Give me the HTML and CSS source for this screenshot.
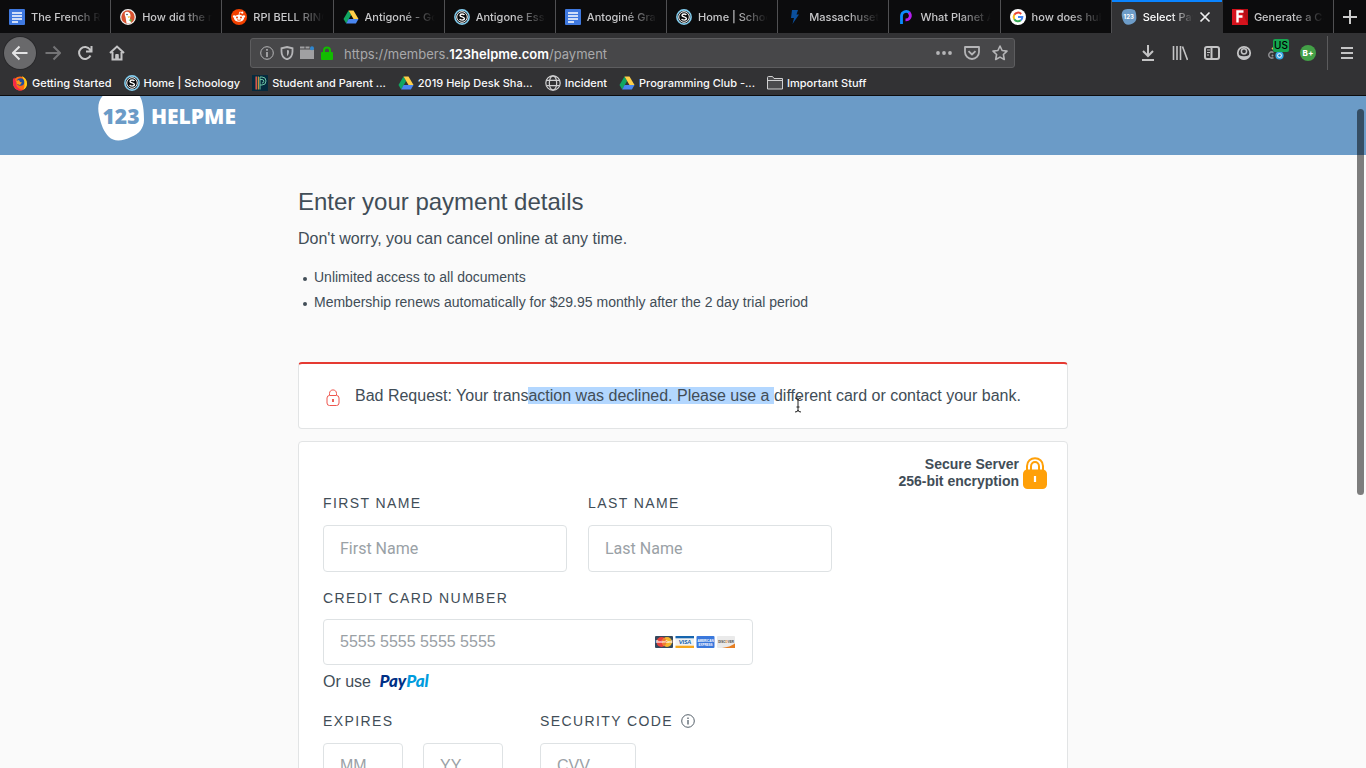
FILE: index.html
```html
<!DOCTYPE html>
<html lang="en">
<head>
<meta charset="utf-8">
<meta name="viewport" content="width=device-width, initial-scale=1">
<title>Select Payment | 123HelpMe</title>
<link rel="stylesheet" href="styles.css">
</head>
<body>
<svg class="defs" width="0" height="0" aria-hidden="true">
  <symbol id="i-docs" viewBox="0 0 16 16"><rect width="16" height="16" rx="1" fill="#3f79e0"/><path d="M3 4h10M3 7h10M3 10h10M3 13h6" stroke="#fff" stroke-width="1.6"/></symbol>
  <symbol id="i-drive" viewBox="0 0 16 16"><path d="M5.5 1.5L0.5 10l2.7 4.5L8.1 6z" fill="#11a660"/><path d="M5.5 1.5h5L15.5 10h-5z" fill="#ffcf48"/><path d="M5.6 10h9.9l-2.6 4.5H3.2z" fill="#4a86f0"/></symbol>
  <symbol id="i-schoology" viewBox="0 0 16 16"><circle cx="8" cy="8" r="7.1" fill="#0b0b0c" stroke="#84cdee" stroke-width="1.6"/><circle cx="8" cy="8" r="5.3" fill="none" stroke="#fff" stroke-width="1"/><path d="M10.3 6C10 4.7 6 4.500 6 6.500C6 8.300 10.400 7.500 10.400 9.600C10.400 11.700 6 11.500 5.700 9.900" fill="none" stroke="#fff" stroke-width="1.400"/></symbol>
  <symbol id="i-blob" viewBox="0 0 46 50"><path d="M7 3C14-1 34-1 41 4C45 9 46 20 46 29C46 37 41 43 33 46C25 50 16 51 11 46C6 41 3 34 1 24C-1 15 1 7 7 3Z"/></symbol>
</svg>

<header class="browser">
  <nav class="tabs" aria-label="Open tabs">
    <button class="tab"><svg class="ico"><use href="#i-docs"/></svg><span>The French Revolution</span></button>
    <button class="tab"><svg class="ico" viewBox="0 0 16 16"><circle cx="8" cy="8" r="7.300" fill="#d8512f" stroke="#eee" stroke-width="1.300"/><path d="M5 3.500C7 2 10.500 3 10.500 6.500L10 9.500L11 14C9 15 7 14.500 6.500 14L5.500 8C4.500 6 4.600 4.500 5 3.500Z" fill="#fff"/><path d="M7.500 7.500L11.500 7.200L8.500 9Z" fill="#f9b82d"/><circle cx="7" cy="5.500" r=".8" fill="#345"/><path d="M8.500 11l3-1v3z" fill="#65bc46"/></svg><span>How did the revolution</span></button>
    <button class="tab"><svg class="ico" viewBox="0 0 16 16"><circle cx="8" cy="8" r="8" fill="#f24100"/><ellipse cx="8" cy="9.300" rx="5" ry="3.500" fill="#fff"/><circle cx="3.200" cy="7.500" r="1.300" fill="#fff"/><circle cx="12.800" cy="7.500" r="1.300" fill="#fff"/><circle cx="11.300" cy="3.700" r="1.100" fill="#fff"/><path d="M8 6l.7-3 2.500.7" stroke="#fff" fill="none" stroke-width=".8"/><circle cx="6" cy="8.500" r="1" fill="#f24100"/><circle cx="10" cy="8.500" r="1" fill="#f24100"/><path d="M6 10.700Q8 12 10 10.700" stroke="#f24100" fill="none" stroke-width=".8"/></svg><span>RPI BELL RINGER</span></button>
    <button class="tab"><svg class="ico"><use href="#i-drive"/></svg><span>Antigoné - Google Drive</span></button>
    <button class="tab"><svg class="ico"><use href="#i-schoology"/></svg><span>Antigone Essay Final</span></button>
    <button class="tab"><svg class="ico"><use href="#i-docs"/></svg><span>Antoginé Graphic</span></button>
    <button class="tab"><svg class="ico"><use href="#i-schoology"/></svg><span>Home | Schoology</span></button>
    <button class="tab"><svg class="ico" viewBox="0 0 16 16"><path d="M5 1h6L9.500 5.500H12L5.500 15 7 9H4z" fill="#0b4f9c"/></svg><span>Massachusetts Law</span></button>
    <button class="tab"><svg class="ico" viewBox="0 0 16 16"><path d="M3.500 15V7a4.600 4.600 0 0 1 8-3" stroke="#0b8cff" stroke-width="2.800" fill="none"/><path d="M11 3.500C14 7 11.500 11 7.500 10.800" stroke="#b51cf0" stroke-width="2.800" fill="none"/></svg><span>What Planet Are You</span></button>
    <button class="tab"><svg class="ico" viewBox="0 0 16 16"><circle cx="8" cy="8" r="8" fill="#fff"/><g fill="none" stroke-width="2"><path d="M4.300 5.800A4.300 4.300 0 0 1 11.200 5" stroke="#e94435"/><path d="M4.300 10.200A4.300 4.300 0 0 1 4.300 5.800" stroke="#f9bc15"/><path d="M4.300 10.200A4.300 4.300 0 0 0 10.800 11.300" stroke="#34a853"/><path d="M8 8h4.300A4.300 4.300 0 0 1 10.800 11.300" stroke="#4285f4"/></g></svg><span>how does hubble work</span></button>
    <button class="tab active" aria-current="page"><span class="favicon-123"><svg class="ico"><use href="#i-blob"/></svg><b>123</b></span><span class="label">Select Payment</span><svg class="close" viewBox="0 0 12 12"><path d="M1.500 1.500l9 9M10.500 1.500l-9 9" stroke="#eee" stroke-width="1.700"/></svg></button>
    <button class="tab"><svg class="ico" viewBox="0 0 16 16"><path d="M0 0h16v16H0z" fill="#d5131d"/><path d="M9 0h7v16z" fill="#b70c15"/><path d="M5.500 13.500v-11h6M5.500 7.500h5" fill="none" stroke="#fff" stroke-width="2.400"/></svg><span>Generate a Card</span></button>
    <button class="new-tab" aria-label="New tab"><svg viewBox="0 0 14 14"><path d="M7 0v14M0 7h14" stroke="#ccc" stroke-width="2"/></svg></button>
  </nav>

  <div class="toolbar">
    <div class="nav-buttons">
      <button class="tool back" aria-label="Back"><svg class="ico" viewBox="0 0 16 16"><path d="M15.500 8H1M7.500 1.500L1 8l6.500 6.500"/></svg></button>
      <button class="tool dim" aria-label="Forward"><svg class="ico" viewBox="0 0 16 16"><path d="M.5 8H15M8.500 1.500L15 8l-6.500 6.500"/></svg></button>
      <button class="tool" aria-label="Reload"><svg class="ico" viewBox="0 0 16 16"><path d="M13.500 10.500A6 6 0 1 1 13 4.500L14.500 6M14.500 1v5.500H9"/></svg></button>
      <button class="tool" aria-label="Home"><svg class="ico" viewBox="0 0 16 16"><path d="M1 8l7-6.500L15 8M3.500 7v7.500h9V7M8 14v-4"/><path d="M6.700 9.500h2.600v5H6.700z" stroke-width="1"/></svg></button>
    </div>
    <div class="urlbar">
      <svg class="small" viewBox="0 0 14 14"><g fill="none" stroke="#b5b5b7"><circle cx="7" cy="7" r="6.300"/><path d="M7 6v5M7 3v1.700" stroke-width="1.600"/></g></svg>
      <svg class="small" viewBox="0 0 14 14"><path d="M7 1l5.500 1.300V5.500C12.500 10 10 12.300 7 13.300C4 12.300 1.500 10 1.500 5.500V2.300Z" fill="none" stroke="#b5b5b7" stroke-width="1.800"/><path d="M7 4L9 4.500C9 7.500 8.500 9 7 10Z" fill="#b5b5b7"/></svg>
      <svg class="small" viewBox="0 0 14 14"><path d="M0 3.500h14V13H0z" fill="#a0a0a2"/><path d="M0 1.500h4.500M5.500 1.500h4" stroke="#a0a0a2" stroke-width="2"/><circle cx="12" cy="2.200" r="2" fill="#2f87d0"/></svg>
      <svg class="small" viewBox="0 0 14 14"><path d="M4 7V4.500a3 3 0 0 1 6 0V7" fill="none" stroke="#12bc00" stroke-width="2"/><rect x="1" y="6" width="12" height="8" rx="1" fill="#12bc00"/></svg>
      <div class="address" role="textbox" aria-label="Address" contenteditable="true" spellcheck="false">https://members.<b>123helpme.com</b>/payment</div>
      <button class="url-action" aria-label="Page actions"><svg class="ico" viewBox="0 0 16 16"><g fill="#b5b5b7"><circle cx="2" cy="8" r="1.900"/><circle cx="8" cy="8" r="1.900"/><circle cx="14" cy="8" r="1.900"/></g></svg></button>
      <button class="url-action" aria-label="Save to Pocket"><svg class="ico" viewBox="0 0 16 16"><path d="M1 2h14v5a7 7 0 0 1-14 0zM4.500 6.200L8 9.500l3.500-3.300" fill="none" stroke="#b5b5b7" stroke-width="1.800" stroke-linejoin="round"/></svg></button>
      <button class="url-action" aria-label="Bookmark page"><svg class="ico" viewBox="0 0 16 16"><path d="M8 1l2.100 4.500 4.900.6-3.600 3.400.9 5L8 12.100l-4.300 2.400.9-5L1 6.100l4.900-.6z" fill="none" stroke="#b5b5b7" stroke-width="1.600" stroke-linejoin="round"/></svg></button>
    </div>
    <div class="actions">
      <button class="tool" aria-label="Downloads"><svg class="ico" viewBox="0 0 16 16"><path d="M8 0v11M3 6l5 5 5-5M2 15h12"/></svg></button>
      <button class="tool" aria-label="Library"><svg class="ico" viewBox="0 0 16 16"><path d="M1.500 1v14M5 1v14M8.500 1v14M10.500 1.500L15.500 15" stroke-width="1.600"/></svg></button>
      <button class="tool" aria-label="Sidebars"><svg class="ico" viewBox="0 0 16 16"><rect x="1" y="2" width="14" height="12" rx="2"/><path d="M7.500 2v12"/><path d="M3 5h3M3 7.500h3M3 10h2" stroke-width="1"/></svg></button>
      <button class="tool" aria-label="Account"><svg class="ico" viewBox="0 0 16 16"><circle cx="8" cy="8" r="6.200" stroke-width="1.800"/><circle cx="8" cy="6.300" r="2.600" stroke-width="1.500"/><path d="M2.500 10Q8 12.500 13.500 10Q12 14.500 8 14.500Q4 14.500 2.500 10Z" fill="#c4c4c5" stroke="none"/></svg></button>
      <button class="tool vpn" aria-label="VPN region"><svg class="ico" viewBox="0 0 16 16"><path d="M5.500 7.500a3 3 0 1 0 0 5" stroke="#8b8b8e" stroke-width="1.500"/><circle cx="4.500" cy="10.500" r="1" fill="#999" stroke="none"/><path d="M4 4l3-2" stroke="#e5b84c"/><circle cx="11.500" cy="10.500" r="3.200" fill="#fff" stroke="#38a9e8" stroke-width="1.800"/><circle cx="11.500" cy="10.500" r="1.300" fill="#1578bb" stroke="none"/></svg><span class="badge">US</span></button>
      <button class="tool" aria-label="Grade extension"><span class="grade">B+</span></button>
      <span class="divider"></span>
      <button class="tool" aria-label="Menu"><svg class="ico" viewBox="0 0 16 16"><path d="M2 3h12M2 8h12M2 13h12"/></svg></button>
    </div>
  </div>

  <nav class="bookmarks" aria-label="Bookmarks">
    <a href="#"><svg class="ico" viewBox="0 0 16 16"><circle cx="8" cy="8.500" r="7" fill="#ff6a16"/><path d="M10 1C16 4 17 12 11 15C14 11 12 6 10 1Z" fill="#ffcb16"/><path d="M1 4C0 13 6 17 11 15C5 14 3 10 5 6L3 5.500L2.500 2.500Z" fill="#f42949"/><circle cx="8.500" cy="7" r="3.800" fill="#204d9d"/><path d="M4 6l3-1 1 2 2 .5-2 2.500-3-1z" fill="#ff9a18"/></svg>Getting Started</a>
    <a href="#"><svg class="ico"><use href="#i-schoology"/></svg>Home | Schoology</a>
    <a href="#"><svg class="ico" viewBox="0 0 16 16"><path d="M0 0h16v16H0z" fill="#062b3e"/><path d="M4.200 1.500v13" stroke="#ef5b4d" stroke-width="1.400"/><path d="M6.300 1.500v13" stroke="#f5aa3c" stroke-width="1"/><path d="M8 14.500V2h2a3.500 3.500 0 0 1 0 8H8M8 4.500h2a1.500 1.500 0 0 1 0 3.500" fill="none" stroke="#6bc4a4"/></svg>Student and Parent ...</a>
    <a href="#"><svg class="ico"><use href="#i-drive"/></svg>2019 Help Desk Sha...</a>
    <a href="#"><svg class="ico" viewBox="0 0 16 16"><g fill="none" stroke="#d0d0d1" stroke-width="1.200"><circle cx="8" cy="8" r="7.200"/><ellipse cx="8" cy="8" rx="3.700" ry="7.200"/><path d="M1.500 5.300h13M1.500 10.700h13"/></g></svg>Incident</a>
    <a href="#"><svg class="ico"><use href="#i-drive"/></svg>Programming Club -...</a>
    <a href="#"><svg class="ico" viewBox="0 0 16 16"><path d="M.5 14V2.500Q.5 1.500 1.500 1.500H5.500L7 3.500H15.500V14ZM.5 5.500H15.500" fill="#4b4b4d" stroke="#d0d0d1"/></svg>Important Stuff</a>
  </nav>
</header>

<div class="page">
  <header class="site-header">
    <div class="site-inner">
      <a class="logo" href="#"><span class="logo-mark"><svg><use href="#i-blob"/></svg><b>123</b></span><span class="logo-name">HELPME</span></a>
    </div>
  </header>
  <main class="content">
    <h1>Enter your payment details</h1>
    <p class="lead">Don't worry, you can cancel online at any time.</p>
    <ul class="benefits">
      <li>Unlimited access to all documents</li>
      <li>Membership renews automatically for $29.95 monthly after the 2 day trial period</li>
    </ul>
    <section class="alert" role="alert">
      <svg class="ico" viewBox="0 0 16 18"><g fill="none" stroke="#ee574f" stroke-width="1"><rect x="2" y="6.500" width="12" height="10" rx="2.500"/><path d="M4.500 6V4.500C4.500-.3 11.500-.3 11.500 4.500V6"/></g><path d="M8 10v3" stroke="#e83a31" stroke-width="1.600"/></svg>
      <p>Bad Request: Your trans<mark>action was declined. Please use a </mark>dif<span class="caret-anchor">fe<svg class="cursor" viewBox="0 0 8 16"><path d="M1 1Q4 1 4 3Q4 1 7 1M4 2.500v11M1 15Q4 15 4 13Q4 15 7 15M2.500 10h3" fill="none" stroke="#222"/></svg></span>rent card or contact your bank.</p>
    </section>
    <form class="card">
      <div class="secure">
        <p>Secure Server<br>256-bit encryption</p>
        <svg viewBox="0 0 24 32"><path d="M4 15V9C4-1.300 20-1.300 20 9v6M8 15V9.500C8 3.500 16 3.500 16 9.500V15" fill="none" stroke="#ffa009" stroke-width="2"/><rect y="12.500" width="24" height="19.500" rx="4.500" fill="#ffa009"/><path d="M12 19v6" stroke="#fff" stroke-width="2.200"/></svg>
      </div>
      <div class="row names">
        <div class="field"><label for="first">First name</label><input id="first" class="name-input" type="text" placeholder="First Name"></div>
        <div class="field"><label for="last">Last name</label><input id="last" class="name-input" type="text" placeholder="Last Name"></div>
      </div>
      <div class="field number">
        <label for="number">Credit card number</label>
        <div class="number-box">
          <input id="number" type="text" inputmode="numeric" placeholder="5555 5555 5555 5555">
          <svg class="brands" viewBox="0 0 81 12" role="img" aria-label="MasterCard, Visa, American Express, Discover">
            <rect width="18" height="12" rx="1" fill="#34495e"/><circle cx="6.500" cy="6" r="5" fill="#e8403a"/><circle cx="12" cy="6" r="5" fill="#f4b62c"/><path d="M9.250 1.800a5 5 0 0 1 0 8.400a5 5 0 0 1 0-8.400" fill="#f07a32"/><text x="9" y="7" class="mini">MasterCard</text>
            <rect x="20.500" width="18.500" height="12" rx="1" fill="#f2f2f2"/><path d="M20.500 0H39v2.300H20.500z" fill="#1565ae"/><path d="M20.500 9.700H39V12H20.500z" fill="#f5a71c"/><text x="30" y="8.200" class="visa">VISA</text>
            <rect x="41.500" width="18" height="12" rx="1" fill="#3a78dc"/><text x="50.500" y="5.500" class="mini">AMERICAN</text><text x="50.500" y="9.500" class="mini">EXPRESS</text>
            <rect x="62" width="18" height="12" rx="1" fill="#eaeaea"/><path d="M80 7.500Q75 11 67 12H80z" fill="#e67e22"/><text x="71" y="6.500" class="disc">DISC<tspan fill="#e67e22">O</tspan>VER</text>
          </svg>
        </div>
      </div>
      <p class="alt-pay">Or use <a href="#" class="paypal">Pay<span>Pal</span></a></p>
      <div class="row details">
        <fieldset class="expires">
          <legend>Expires</legend>
          <div class="row dates">
            <input type="text" aria-label="Expiry month" placeholder="MM">
            <input type="text" aria-label="Expiry year" placeholder="YY">
          </div>
        </fieldset>
        <div class="field code">
          <label for="cvv">Security code <svg viewBox="0 0 14 14"><g fill="none" stroke="#55606a"><circle cx="7" cy="7" r="6.300"/><path d="M7 6v4.500M7 3.500V5" stroke-width="1.300"/></g></svg></label>
          <input id="cvv" type="text" inputmode="numeric" placeholder="CVV">
        </div>
      </div>
    </form>
  </main>
  <div class="scroll-thumb"></div>
</div>
</body>
</html>
```
FILE: styles.css
```css
* { box-sizing: border-box; }
body {
  margin: 0;
  height: 100vh;
  overflow: hidden;
  display: flex;
  flex-direction: column;
  font-family: "Liberation Sans", Arial, sans-serif;
  color: #414d57;
  background: #fafafa;
}
button { font: inherit; color: inherit; background: none; border: 0; padding: 0; }
p, h1, ul, fieldset { margin: 0; padding: 0; border: 0; }
.defs { position: absolute; }
.ico { width: 16px; height: 16px; flex: none; }

/* Browser frame */
.browser {
  flex: none;
  background: #323234;
  border-bottom: 1px solid #0c0c0d;
  font-family: Inter, sans-serif;
  font-size: 11px;
  font-weight: 500;
  color: #f9f9fa;
}
.tabs { display: flex; height: 33px; background: #0c0c0d; }
.tab {
  flex: 1 1 0;
  min-width: 0;
  display: flex;
  align-items: center;
  gap: 6px;
  padding: 0 9px;
  border-right: 1px solid #505052;
  color: #c8c8ca;
  text-align: left;
}
.tab > span:not(.favicon-123) {
  flex: 1;
  overflow: hidden;
  white-space: nowrap;
  line-height: 16px;
  mask-image: linear-gradient(to right, #000 55%, transparent);
}
.tab.active {
  background: #323234;
  box-shadow: inset 0 2px #0a84ff;
  border-right-color: #323234;
  color: #fff;
}
.favicon-123 { display: grid; place-items: center; flex: none; fill: #6d9cc8; }
.favicon-123 > * { grid-area: 1 / 1; }
.favicon-123 b { font-size: 6px; line-height: 8px; color: #fff; }
.close { width: 12px; height: 12px; flex: none; margin-right: 2px; }
.new-tab { width: 32px; display: grid; place-items: center; }
.new-tab svg { width: 14px; height: 14px; }

.toolbar { display: flex; align-items: center; height: 40px; }
.nav-buttons { display: flex; width: 250px; padding-left: 4px; }
.tool { width: 32px; height: 32px; display: grid; place-items: center; position: relative; }
.tool .ico { fill: none; stroke: #c4c4c5; stroke-width: 2; }
.back { margin-right: 1px; background: #69696b; border-radius: 50%; box-shadow: 0 0 0 1px #29292b; }
.back .ico { stroke: #e4e4e5; }
.dim .ico { stroke: #747476; }
.urlbar {
  flex: 1;
  min-width: 0;
  height: 30px;
  display: flex;
  align-items: center;
  gap: 6px;
  padding: 0 3px 0 9px;
  background: #474749;
  border: 1px solid #5d5d5f;
  border-radius: 3px;
}
.small { width: 14px; height: 14px; flex: none; }
.address {
  flex: 1;
  min-width: 0;
  padding: 2px 0 0 4px;
  font-size: 13px;
  font-weight: 400;
  line-height: 20px;
  white-space: nowrap;
  overflow: hidden;
  color: #a9a9ab;
}
.address b { font-weight: 600; color: #fff; }
.url-action { width: 22px; height: 22px; display: grid; place-items: center; }
.actions { display: flex; align-items: center; width: 351px; padding-right: 3px; justify-content: flex-end; }
.divider { width: 1px; height: 34px; margin: 0 3px; background: #5b5b5d; }
.badge {
  position: absolute;
  left: 13px;
  top: 2px;
  padding: 0 1px;
  border-radius: 2px;
  background: #16a550;
  color: #000;
  font-size: 10px;
  line-height: 13px;
}
.grade {
  width: 16px;
  border-radius: 50%;
  background: #43a047;
  color: #fff;
  font-size: 8px;
  font-weight: 800;
  line-height: 16px;
  text-align: center;
}
.bookmarks { display: flex; align-items: center; gap: 12px; height: 22px; padding: 0 12px 2px; }
.bookmarks a {
  display: flex;
  align-items: center;
  gap: 4px;
  color: inherit;
  text-decoration: none;
  white-space: nowrap;
  line-height: 16px;
}

/* Payment page */
.page { flex: 1; min-height: 0; overflow: hidden; position: relative; }
.scroll-thumb {
  position: absolute;
  top: 13px;
  right: 2px;
  width: 7px;
  height: 386px;
  border-radius: 4px;
  background: rgba(0, 0, 0, .5);
}
.site-header { background: #6b9bc7; height: 59px; overflow: hidden; }
.site-inner { max-width: 1170px; margin: 0 auto; }
.logo { display: inline-flex; align-items: center; gap: 7px; height: 40px; color: #fff; text-decoration: none; }
.logo-mark { display: grid; place-items: center; color: #6b9bc7; fill: #fff; }
.logo-mark > * { grid-area: 1 / 1; }
.logo-mark svg { width: 46px; height: 50px; }
.logo-mark b, .logo-name {
  font-family: "Open Sans", sans-serif;
  font-size: 21px;
  font-weight: 800;
  line-height: 24px;
}

.content { max-width: 770px; margin: 0 auto; padding-top: 32px; }
h1 { font-size: 24px; font-weight: 400; line-height: 30px; }
.lead { margin-top: 12px; font-size: 16px; line-height: 20px; }
.benefits { margin-top: 16px; padding-left: 16px; font-size: 14px; line-height: 25px; }
.benefits li { list-style: none; display: flex; align-items: center; }
.benefits li::before { content: ""; width: 4px; height: 4px; margin: 2px 7px 0 -11px; border-radius: 50%; background: currentColor; }
.alert, .card { background: #fff; border: 1px solid #e2e4e5; border-radius: 4px; }
.alert {
  display: flex;
  align-items: center;
  gap: 14px;
  margin-top: 47px;
  padding: 21px 24px 21px 26px;
  border-top: 2px solid #e53a32;
  font-size: 16px;
  line-height: 20px;
}
.alert .ico { height: 18px; margin-top: 4px; }
mark { background: #b3d7ff; color: inherit; }
.caret-anchor { position: relative; }
.cursor { position: absolute; right: 2px; top: 10px; width: 8px; height: 16px; }
.card { position: relative; margin-top: 12px; padding: 51px 24px 24px; }
.secure {
  position: absolute;
  top: 14px;
  right: 20px;
  display: flex;
  align-items: center;
  gap: 4px;
  font-size: 14px;
  font-weight: 700;
  line-height: 17px;
  text-align: right;
}
.secure svg { width: 24px; height: 32px; }
.row { display: flex; }
.names { gap: 21px; }
.names .field { width: 244px; }
label, legend {
  display: flex;
  align-items: center;
  gap: 8px;
  padding: 0;
  font-size: 14px;
  line-height: 20px;
  letter-spacing: .1em;
  text-transform: uppercase;
}
label svg { width: 14px; height: 14px; }
input {
  width: 100%;
  height: 46px;
  padding: 0 16px;
  border: 1px solid #dee2e4;
  border-radius: 4px;
  background: #fff;
  font: 16px "Liberation Sans", Arial, sans-serif;
  color: #414d57;
}
.field input, .dates { margin-top: 12px; }
.name-input { height: 47px; font-family: Roboto, sans-serif; }
input::placeholder { color: #9aa1a6; opacity: 1; }
.number { max-width: 430px; margin-top: 16px; }
.number-box { position: relative; margin-top: 11px; }
.number-box input { margin: 0; display: block; }
.brands { position: absolute; right: 17px; top: 17px; width: 81px; height: 12px; }
.mini { font: 700 3px "Liberation Sans", sans-serif; fill: #fff; text-anchor: middle; }
.visa { font: italic 900 6px Lato, sans-serif; fill: #1565ae; text-anchor: middle; }
.disc { font: 700 3px "Liberation Sans", sans-serif; fill: #444; text-anchor: middle; }
.alt-pay { margin-top: 6px; font-size: 16px; line-height: 20px; }
.paypal { margin-left: 4px; font: italic 900 17px/20px Lato, sans-serif; color: #002f86; text-decoration: none; }
.paypal span { color: #009cde; }
.details { gap: 37px; margin-top: 19px; }
.dates { gap: 20px; }
.expires { width: 180px; min-width: 0; }
.code input { display: block; width: 96px; }
```
